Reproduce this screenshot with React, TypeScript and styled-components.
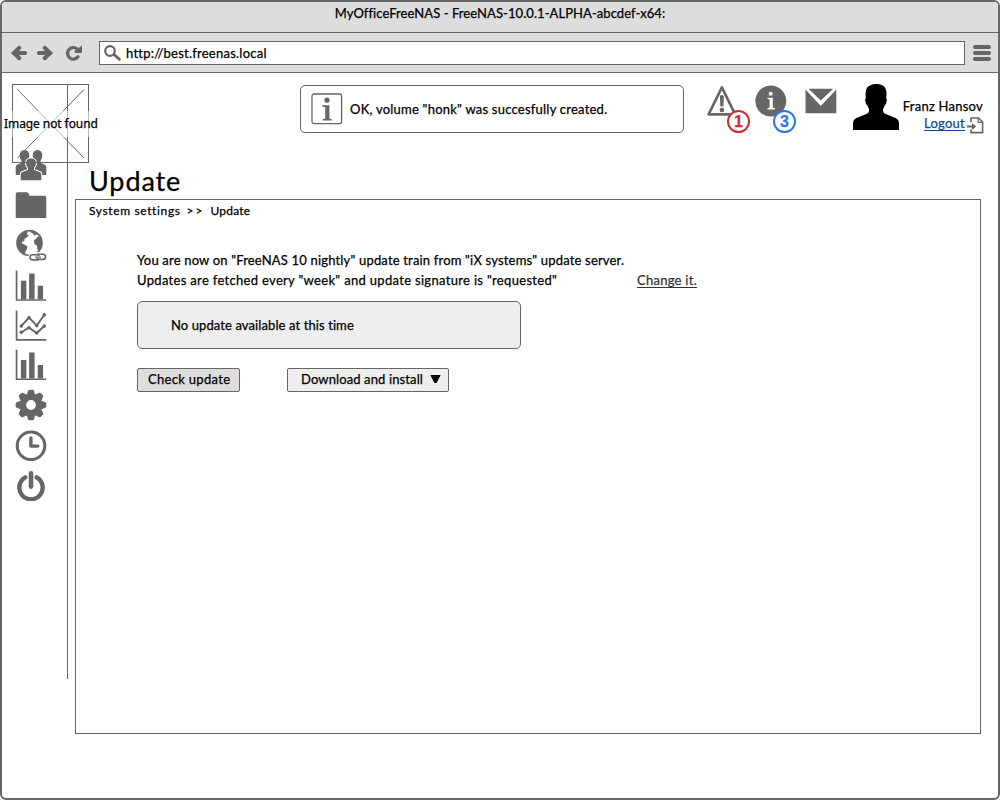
import React from "react";
import styled, { createGlobalStyle } from "styled-components";

const ink = "#666666";

const GlobalStyle = createGlobalStyle`
  * { box-sizing: border-box; }
  body { margin: 0; background: #fff; }
  svg { display: block; flex: none; }
`;

const Window = styled.div`
  position: relative;
  display: flex;
  flex-direction: column;
  width: 1000px;
  height: 800px;
  border: 2px solid ${ink};
  border-radius: 6px;
  background: #fff;
  overflow: hidden;
  font-family: Lato, "Open Sans", sans-serif;
  font-size: 13px;
  line-height: 20px;
  color: #000;
  -webkit-text-stroke: 0.25px;
`;

const Text = styled.span<{ $track?: number }>`
  letter-spacing: ${(p) => p.$track ?? 0.2}px;
  white-space: nowrap;
`;

const TitleBar = styled.header`
  height: 31px;
  padding-top: 1px;
  background: #ddd;
  border-bottom: 1px solid ${ink};
  text-align: center;
`;

const Toolbar = styled.div`
  display: flex;
  align-items: center;
  height: 40px;
  padding: 0 7px 0 9px;
  background: #ddd;
  border-bottom: 1px solid ${ink};
`;

const NavButtons = styled.nav`
  display: flex;
  width: 88px;
`;

const AddressBar = styled.div`
  display: flex;
  align-items: center;
  flex: 1;
  height: 24px;
  margin-right: 8px;
  padding-left: 4px;
  gap: 5px;
  background: #fff;
  border: 1px solid ${ink};
`;

const Page = styled.div`
  display: flex;
  flex: 1;
`;

const Sidebar = styled.aside`
  display: flex;
  flex-direction: column;
  width: 66px;
  height: 595px;
  margin-top: 11px;
  padding: 65px 0 0 13px;
  gap: 8px;
  border-right: 1px solid ${ink};
`;

const Main = styled.main`
  display: flex;
  flex-direction: column;
  width: 906px;
  margin-left: 7px;
`;

const Header = styled.div`
  display: flex;
  align-items: flex-start;
  height: 91px;
  padding: 10px 0 0 225px;
`;

const Alert = styled.div`
  display: flex;
  align-items: center;
  width: 384px;
  height: 48px;
  margin: 2px 22px 0 0;
  padding: 0 10px;
  gap: 7px;
  border: 1px solid ${ink};
  border-radius: 5px;
`;

const Indicator = styled.div<{ $width: number }>`
  position: relative;
  width: ${(p) => p.$width}px;
`;

const Badge = styled.span<{ $color: string; $left: number }>`
  position: absolute;
  left: ${(p) => p.$left}px;
  top: 27px;
  width: 23px;
  height: 23px;
  border: 2px solid ${(p) => p.$color};
  border-radius: 50%;
  background: #fff;
  color: ${(p) => p.$color};
  font: bold 16px/19px "Liberation Sans", sans-serif;
  text-align: center;
`;

const User = styled.div`
  display: flex;
  flex-direction: column;
  align-items: flex-end;
  margin: 13px -3px 0 auto;
`;

const UserName = styled(Text)`
  margin-right: 1px;
`;

const LogoutRow = styled.div`
  display: flex;
  align-items: flex-start;
  gap: 2px;
  height: 20px;
  margin-top: 1px;
`;

const LogoutLink = styled.a`
  height: 14px;
  border-bottom: 1px solid #0b4c8c;
  color: #0b4c8c;
  line-height: 13px;
  letter-spacing: 0.25px;
`;

const Heading = styled.h1`
  height: 35px;
  margin: 0;
  padding-left: 14px;
  font-size: 27px;
  font-weight: 400;
  line-height: 34px;
  letter-spacing: 0.9px;
`;

const Panel = styled.section`
  display: flex;
  flex-direction: column;
  height: 535px;
  border: 1px solid ${ink};
`;

const Breadcrumb = styled.div`
  display: flex;
  gap: 6px;
  padding: 1px 0 0 13px;
  font-size: 12px;
`;

const UpdateInfo = styled.div`
  display: flex;
  flex-direction: column;
  align-items: flex-start;
  padding: 29px 0 0 61px;
`;

const ScheduleRow = styled.div`
  display: flex;
  width: 560px;
  height: 20px;
  justify-content: space-between;
`;

const ChangeLink = styled.a`
  height: 18px;
  border-bottom: 1px solid #333;
  color: #333;
  letter-spacing: 0.27px;
`;

const StatusBox = styled.div`
  display: flex;
  align-items: center;
  width: 384px;
  height: 48px;
  margin-top: 11px;
  padding-left: 33px;
  border: 1px solid ${ink};
  border-radius: 5px;
  background: #eee;
`;

const Actions = styled.div`
  display: flex;
  gap: 47px;
  margin-top: 19px;
`;

const Button = styled.button<{ $width: number; $fill: string; $inset: number }>`
  display: flex;
  align-items: center;
  gap: 7px;
  width: ${(p) => p.$width}px;
  height: 24px;
  padding: 0 0 2px ${(p) => p.$inset}px;
  border: 1px solid ${ink};
  border-radius: 2px;
  background: ${(p) => p.$fill};
  color: #000;
  font: inherit;
  line-height: 20px;
`;

const MissingImage = styled.div`
  position: absolute;
  left: 10px;
  top: 82px;
  width: 77px;
  height: 79px;
  border: 1px solid ${ink};
  pointer-events: none;
`;

const MissingLabel = styled.div`
  position: absolute;
  left: -13px;
  top: 26px;
  width: 100px;
  height: 26px;
  padding-left: 4px;
  background: linear-gradient(90deg, rgba(255, 255, 255, 0.4), rgba(255, 255, 255, 0.6) 50%, rgba(255, 255, 255, 0.5));
  font: 12px/26px "Noto Sans", sans-serif;
  letter-spacing: -0.08px;
  white-space: nowrap;
`;

const ArrowIcon = ({ flip = false }) => (
  <svg width="26" height="18" viewBox="0 0 26 18" fill="none" stroke={ink}>
    <g transform={flip ? "translate(16 0) scale(-1 1)" : undefined}>
      <path d="M8.3 3.8 L3 9 L8.3 14.2" strokeWidth="4" strokeLinecap="round" />
      <path d="M3 9 H14" strokeWidth="4" strokeLinecap="round" />
      <path d="M0 9 L8 2 V16 Z" fill={ink} stroke="none" />
    </g>
  </svg>
);

const ReloadIcon = () => (
  <svg width="20" height="18" viewBox="0 0 20 18">
    <path d="M11 4.8 A5.8 5.8 0 1 0 12 12.8" fill="none" stroke={ink} strokeWidth="3.2" strokeLinecap="round" />
    <path d="M16 1.6 V9 H9.2 L8.4 7 L11 5 Z" fill={ink} />
  </svg>
);

const SearchIcon = () => (
  <svg width="17" height="16" viewBox="0 0 17 16" fill="none" stroke={ink}>
    <circle cx="6" cy="6" r="4.8" strokeWidth="2.2" />
    <path d="M10 9.5 L15.2 14.2" strokeWidth="3" strokeLinecap="round" />
  </svg>
);

const MenuIcon = () => (
  <svg width="18" height="18" viewBox="0 0 18 18" fill={ink}>
    <rect y="1" width="18" height="4" rx="2" />
    <rect y="7" width="18" height="4" rx="2" />
    <rect y="13" width="18" height="4" rx="2" />
  </svg>
);

const InfoBoxIcon = () => (
  <svg width="32" height="32" viewBox="0 0 32 32" fill={ink}>
    <rect x="1" y="1" width="29.6" height="29.6" rx="2" fill="none" stroke={ink} strokeWidth="1.3" />
    <circle cx="16" cy="7.2" r="2.6" />
    <path d="M11.2 12.2 H18.4 V25.6 L20.8 26.2 V27.6 H11.6 V26.2 L14.2 25.6 V14.2 L11.2 13.6 Z" />
  </svg>
);

const WarningIcon = () => (
  <svg width="32" height="34" viewBox="0 0 32 34" fill={ink}>
    <path d="M15.9 4.4 L2.6 31.4 H29.2 Z" fill="none" stroke={ink} strokeWidth="2.6" strokeLinejoin="round" />
    <path d="M13.9 13 Q15.9 10.8 17.9 13 L17.4 23.5 H14.4 Z" />
    <circle cx="15.9" cy="27" r="2.3" />
  </svg>
);

const InfoIcon = () => (
  <svg width="32" height="34" viewBox="0 0 32 34">
    <circle cx="15.8" cy="18" r="15.4" fill={ink} />
    <circle cx="15.7" cy="10.7" r="2" fill="#fff" />
    <path d="M12.5 14.7 H17.8 V24.6 L20 25.3 V26.6 H12.4 V25.3 L14.6 24.6 V16.6 L12.5 16 Z" fill="#fff" />
  </svg>
);

const MailIcon = () => (
  <svg width="32" height="34" viewBox="0 0 32 34" fill={ink}>
    <path d="M3.5 5.7 H28.2 L15.8 17.6 Z" />
    <path d="M0.5 6.6 L15.8 23 L31.3 6.6 V30.2 H0.5 Z" />
  </svg>
);

const Avatar = () => (
  <svg width="46" height="48" viewBox="0 0 46 48">
    <path
      d="M0 47 V40.5 Q0 36.5 3.5 35 L14.5 30.6 Q16.3 29.6 16.2 26.5 L14.3 22.6 Q12.6 21.5 12.2 17.5 Q12 15.5 12.8 15.2 Q12 8 14 4.7 Q15 3 17 2.4 Q20.5 .7 24 1 Q29.5 1.2 32 4.5 Q34.2 8 33.2 15.2 Q34.2 15.6 33.7 18 Q33.3 21.5 31.7 22.6 L30 26.5 Q29.8 29.5 31.5 30.6 L42.5 35 Q46 36.5 46 40.5 V47 Z"
      fill="#000"
    />
  </svg>
);

const ExitIcon = () => (
  <svg width="17" height="17" viewBox="0 0 17 17" fill="none" stroke={ink}>
    <path d="M4 5.2 V1 H11.5 L15.6 5 V15.6 H4 V12.6" strokeWidth="1.6" />
    <path d="M11.2 1 V5.4 H15.6" strokeWidth="1.2" />
    <path d="M0 9.5 H6" strokeWidth="2.2" />
    <path d="M5 6.1 L9.2 9.5 L5 12.9 Z" fill={ink} stroke="none" />
  </svg>
);

const SideSvg = ({ children }: { children: React.ReactNode }) => (
  <svg width="32" height="32" viewBox="0 0 32 32" fill={ink}>
    {children}
  </svg>
);

const person =
  "M5.7 31.3 V25.5 Q5.7 23.5 8 22.8 L12.6 21 Q13.4 20.4 12.8 18.6 Q11.2 16.8 11 14.8 Q10.8 9.6 16 9.5 Q21.2 9.6 21 14.8 Q20.8 16.8 19.2 18.6 Q18.6 20.4 19.4 21 L24 22.8 Q26.3 23.5 26.3 25.5 V31.3 Z";

const sidePerson =
  "M.7 26 V18.2 Q.7 16.2 2.6 15.4 L6 14 Q6.9 13 6.2 11 Q4.6 9 4.7 6.4 Q4.8 1 9.5 .9 Q14.2 1 14.3 6.4 Q14.3 9 12.7 11 Q12.2 13 13 14 L16 15.4 V26 Z";

const UsersIcon = () => (
  <SideSvg>
    <path d={sidePerson} />
    <path transform="translate(32 0) scale(-1 1)" d={sidePerson} />
    <path d={person} stroke="#fff" strokeWidth="2" />
    <path d={person} />
  </SideSvg>
);

const FolderIcon = () => (
  <SideSvg>
    <path d="M.7 29 V5 Q.7 3.2 2.5 3.2 H11.5 Q13.4 3.2 13.8 5 L14.2 6.7 H29.6 Q31.3 6.7 31.3 8.5 V29 Z" />
  </SideSvg>
);

const GlobeIcon = () => (
  <SideSvg>
    <circle cx="14.5" cy="14" r="12.4" fill="#fff" stroke={ink} strokeWidth="1.8" />
    <path d="M2.2 12.5 Q3.8 5.5 9.8 2.6 L12.8 3 L11.6 5 L13.8 6.2 L11.8 8.6 L9.6 9.8 L9.2 12.2 L7.4 12.4 L6.8 14.3 L9.2 15.5 L12.4 17.3 L12 20 L10.6 22.3 L10 25.4 Q2.6 22 2.2 12.5 Z" />
    <path d="M14 2.2 Q20 1.6 24 5.8 L21.8 5.2 L19.4 6.6 L17.5 4.2 Z M24.6 7 Q28.2 12.5 26.2 19.5 L24 22.3 L22.4 20.5 L22 16.8 L19.5 15 L18.8 11.8 L21.2 9.6 L22.4 8 Z" />
    <g fill="#fff" stroke="#fff" strokeWidth="4">
      <rect x="15.2" y="25.8" width="9" height="4.8" rx="2.4" />
      <rect x="21.2" y="25" width="9" height="4.8" rx="2.4" />
    </g>
    <g fill="none" stroke={ink} strokeWidth="1.6">
      <path d="M23.4 30.9 H17.6 A2.6 2.6 0 0 1 17.6 25.7 H21.5 Q23.5 25.7 24 27" />
      <path d="M22.2 25.2 H28 A2.6 2.6 0 0 1 28 30.4 H24.8 Q22.5 30.4 22 29" />
      <path d="M20 28.1 H26" strokeWidth="1.2" />
    </g>
  </SideSvg>
);

const BarsIcon = ({ shift = 0 }) => (
  <SideSvg>
    <g transform={`translate(0 ${shift})`}>
      <path d="M.7 .8 H2.4 V29.4 H31.2 V31 H.7 Z" />
      <path d="M5.9 11 H11.3 V29.4 H5.9 Z M14.1 3.6 H19.6 V29.4 H14.1 Z M22.7 15.9 H28.1 V29.4 H22.7 Z" />
    </g>
  </SideSvg>
);

const series = [
  [[6.3, 17], [14, 8.7], [21.7, 16.6], [29.3, 5.9]],
  [[6.3, 23.2], [14, 18.7], [21.7, 24], [29.3, 17]],
];

const TrendIcon = () => (
  <SideSvg>
    <path d="M.7 1.6 H2.4 V30 H31.2 V31.7 H.7 Z" />
    {series.map((points, i) => (
      <g key={i}>
        <polyline points={points.join(" ")} fill="none" stroke={ink} strokeWidth="1.9" />
        {points.map(([x, y]) => (
          <circle key={x} cx={x} cy={y} r="1.8" />
        ))}
      </g>
    ))}
  </SideSvg>
);

const GearIcon = () => (
  <SideSvg>
    {[0, 45, 90, 135, 180, 225, 270, 315].map((a) => (
      <path key={a} transform={`rotate(${a} 16 16)`} d="M11.2 7 L13.2 1.6 Q13.6 .7 14.5 .7 H17.5 Q18.4 .7 18.8 1.6 L20.8 7 Z" />
    ))}
    <circle cx="16" cy="16" r="7.8" fill="none" stroke={ink} strokeWidth="5.8" />
  </SideSvg>
);

const ClockIcon = () => (
  <SideSvg>
    <circle cx="16" cy="16.8" r="13.8" fill="none" stroke={ink} strokeWidth="3" />
    <path d="M15.9 9 V17.1 H22.8" fill="none" stroke={ink} strokeWidth="3.4" strokeLinecap="round" strokeLinejoin="round" />
  </SideSvg>
);

const PowerIcon = () => (
  <SideSvg>
    <path d="M10.3 8.4 A11.7 11.7 0 1 0 21.7 8.4" fill="none" stroke={ink} strokeWidth="4.4" strokeLinecap="round" />
    <path d="M16 4.3 V17.6" stroke={ink} strokeWidth="4.6" strokeLinecap="round" />
  </SideSvg>
);

const Caret = () => (
  <svg width="11" height="10" viewBox="0 0 11 10">
    <path d="M.3 1 H10.7 L6.6 9 H4.4 Z" />
  </svg>
);

export default function App() {
  return (
    <>
      <GlobalStyle />
      <Window>
        <TitleBar>
          <Text $track={0.07}>MyOfficeFreeNAS - FreeNAS-10.0.1-ALPHA-abcdef-x64:</Text>
        </TitleBar>
        <Toolbar>
          <NavButtons>
            <ArrowIcon />
            <ArrowIcon flip />
            <svg width="3" height="18" />
            <ReloadIcon />
          </NavButtons>
          <AddressBar>
            <SearchIcon />
            <Text $track={0.24}>http://best.freenas.local</Text>
          </AddressBar>
          <MenuIcon />
        </Toolbar>
        <Page>
          <Sidebar>
            <UsersIcon />
            <FolderIcon />
            <GlobeIcon />
            <BarsIcon shift={0.8} />
            <TrendIcon />
            <BarsIcon />
            <GearIcon />
            <ClockIcon />
            <PowerIcon />
          </Sidebar>
          <Main>
            <Header>
              <Alert>
                <InfoBoxIcon />
                <Text $track={0.23}>OK, volume "honk" was succesfully created.</Text>
              </Alert>
              <Indicator $width={49}>
                <WarningIcon />
                <Badge $color="#d02c2c" $left={21}>1</Badge>
              </Indicator>
              <Indicator $width={50}>
                <InfoIcon />
                <Badge $color="#2a78e4" $left={18}>3</Badge>
              </Indicator>
              <Indicator $width={48}>
                <MailIcon />
              </Indicator>
              <Avatar />
              <User>
                <UserName $track={0.24}>Franz Hansov</UserName>
                <LogoutRow>
                  <LogoutLink>Logout</LogoutLink>
                  <ExitIcon />
                </LogoutRow>
              </User>
            </Header>
            <Heading>Update</Heading>
            <Panel>
              <Breadcrumb>
                <Text $track={0.63}>System settings</Text>
                <Text $track={2}>&gt;&gt;</Text>
                <Text>Update</Text>
              </Breadcrumb>
              <UpdateInfo>
                <Text $track={0.18}>You are now on "FreeNAS 10 nightly" update train from "iX systems" update server.</Text>
                <ScheduleRow>
                  <Text $track={0.32}>Updates are fetched every "week" and update signature is "requested"</Text>
                  <ChangeLink>Change it.</ChangeLink>
                </ScheduleRow>
                <StatusBox>
                  <Text $track={0.1}>No update available at this time</Text>
                </StatusBox>
                <Actions>
                  <Button $width={103} $fill="#ddd" $inset={10}>
                    <Text $track={0.31}>Check update</Text>
                  </Button>
                  <Button $width={162} $fill="#eee" $inset={13}>
                    <Text $track={0.12}>Download and install</Text>
                    <Caret />
                  </Button>
                </Actions>
              </UpdateInfo>
            </Panel>
          </Main>
        </Page>
        <MissingImage>
          <svg width="75" height="77" viewBox="0 0 75 77" stroke={ink} strokeWidth="1">
            <path d="M4.5 4.5 L71 73 M71 4.5 L4.5 73" />
          </svg>
          <MissingLabel>Image not found</MissingLabel>
        </MissingImage>
      </Window>
    </>
  );
}
